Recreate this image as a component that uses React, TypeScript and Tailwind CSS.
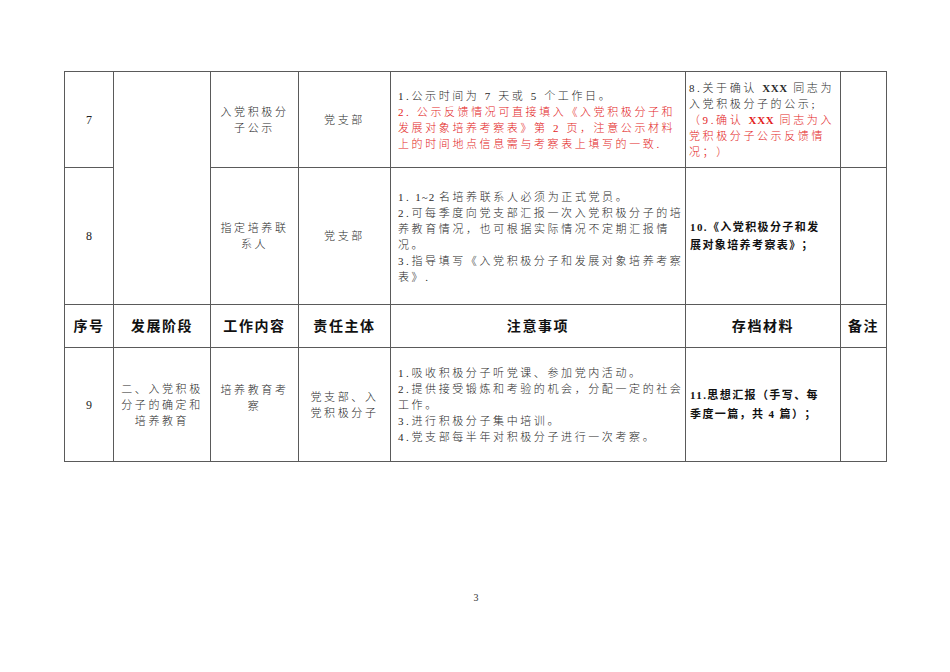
import React from "react";

const FONT = '"Liberation Serif", "Noto Sans CJK SC", serif';

const Lines = ({ lines, className = "" }: { lines: React.ReactNode[]; className?: string }) => (
  <div className={className}>
    {lines.map((l, i) => (
      <div key={i} className="whitespace-nowrap">
        {l}
      </div>
    ))}
  </div>
);

const td = "border border-[#5a5a5a] align-middle p-0";
const body = "text-[11px] tracking-[2.6px] leading-[16px] text-[#2a2a2a] font-light";
const red = "text-[#e31c1c]";
const bold = "text-[11px] tracking-[1.4px] leading-[18.5px] text-[#111] font-bold";
const X = "font-bold tracking-[0.6px]";

export default function App() {
  return (
    <div
      className="w-[950px] h-[672px] bg-white flex flex-col [text-spacing-trim:space-all]"
      style={{ fontFamily: FONT }}
    >
      <div className="pt-[71px] pl-[64px]">
        <table className="table-fixed border-collapse w-[822px]">
          <colgroup>
            <col className="w-[49px]" />
            <col className="w-[97px]" />
            <col className="w-[88px]" />
            <col className="w-[92px]" />
            <col className="w-[295px]" />
            <col className="w-[155px]" />
            <col className="w-[46px]" />
          </colgroup>
          <tbody>
            <tr className="h-[96px]">
              <td className={`${td} text-center text-[12px] text-[#222]`}>7</td>
              <td className={td} rowSpan={2}></td>
              <td className={`${td} text-center`}>
                <Lines className={body} lines={["入党积极分", "子公示"]} />
              </td>
              <td className={`${td} text-center`}>
                <Lines className={body} lines={["党支部"]} />
              </td>
              <td className={`${td} pl-[7px]`}>
                <Lines
                  className={body}
                  lines={[
                    "1.公示时间为 7 天或 5 个工作日。",
                    <span className={red}>2. 公示反馈情况可直接填入《入党积极分子和</span>,
                    <span className={red}>发展对象培养考察表》第 2 页，注意公示材料</span>,
                    <span className={red}>上的时间地点信息需与考察表上填写的一致.</span>,
                  ]}
                />
              </td>
              <td className={`${td} pl-[3px]`}>
                <Lines
                  className={`${body} leading-[15.5px]`}
                  lines={[
                    <span>
                      8.关于确认 <span className={X}>XXX</span> 同志为
                    </span>,
                    "入党积极分子的公示;",
                    <span className={red}>
                      （9.确认 <span className={X}>XXX</span> 同志为入
                    </span>,
                    <span className={red}>党积极分子公示反馈情</span>,
                    <span className={red}>况；）</span>,
                  ]}
                />
              </td>
              <td className={td}></td>
            </tr>
            <tr className="h-[137px]">
              <td className={`${td} text-center text-[12px] text-[#222]`}>8</td>
              <td className={`${td} text-center`}>
                <Lines className={body} lines={["指定培养联", "系人"]} />
              </td>
              <td className={`${td} text-center`}>
                <Lines className={body} lines={["党支部"]} />
              </td>
              <td className={`${td} pl-[7px]`}>
                <Lines
                  className={`${body} leading-[16.5px] pt-[2px]`}
                  lines={[
                    <span>
                      1.<span className="tracking-[1px]"> 1~2 </span>名培养联系人必须为正式党员。
                    </span>,
                    "2.可每季度向党支部汇报一次入党积极分子的培",
                    "养教育情况，也可根据实际情况不定期汇报情",
                    "况。",
                    "3.指导填写《入党积极分子和发展对象培养考察",
                    "表》.",
                  ]}
                />
              </td>
              <td className={`${td} pl-[4px]`}>
                <Lines className={bold} lines={["10.《入党积极分子和发", "展对象培养考察表》；"]} />
              </td>
              <td className={td}></td>
            </tr>
            <tr className="h-[43px] text-[14px] font-bold text-[#111] tracking-[1.6px]">
              <td className={`${td} text-center`}>序号</td>
              <td className={`${td} text-center`}>发展阶段</td>
              <td className={`${td} text-center`}>工作内容</td>
              <td className={`${td} text-center`}>责任主体</td>
              <td className={`${td} text-center`}>注意事项</td>
              <td className={`${td} text-center`}>存档材料</td>
              <td className={`${td} text-center`}>备注</td>
            </tr>
            <tr className="h-[114px]">
              <td className={`${td} text-center text-[12px] text-[#222]`}>9</td>
              <td className={`${td} text-center`}>
                <Lines className={`${body} leading-[15.5px]`} lines={["二、入党积极", "分子的确定和", "培养教育"]} />
              </td>
              <td className={`${td} text-center`}>
                <Lines className={`${body} leading-[15.5px] pb-[14px]`} lines={["培养教育考", "察"]} />
              </td>
              <td className={`${td} text-center`}>
                <Lines className={`${body} leading-[15.5px]`} lines={["党支部、入", "党积极分子"]} />
              </td>
              <td className={`${td} pl-[7px]`}>
                <Lines
                  className={`${body} leading-[16.2px]`}
                  lines={[
                    "1.吸收积极分子听党课、参加党内活动。",
                    "2.提供接受锻炼和考验的机会，分配一定的社会",
                    "工作。",
                    "3.进行积极分子集中培训。",
                    "4.党支部每半年对积极分子进行一次考察。",
                  ]}
                />
              </td>
              <td className={`${td} pl-[4px]`}>
                <Lines className={bold} lines={["11.思想汇报（手写、每", "季度一篇，共 4 篇）；"]} />
              </td>
              <td className={td}></td>
            </tr>
          </tbody>
        </table>
      </div>
      <div className="mt-[128px] text-center text-[10px] text-[#333] pl-[2px]">3</div>
    </div>
  );
}
